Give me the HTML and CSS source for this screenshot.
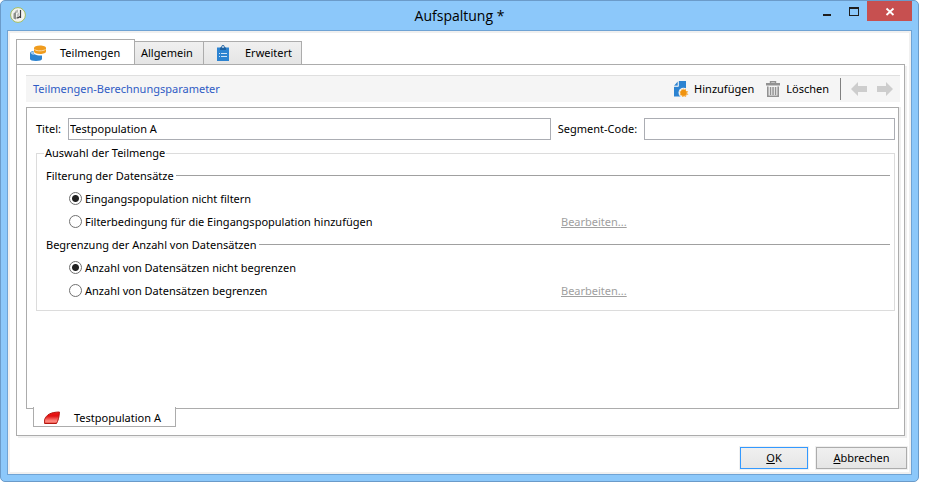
FILE: index.html
```html
<!DOCTYPE html>
<html lang="de">
<head>
<meta charset="utf-8">
<title>Aufspaltung</title>
<link rel="stylesheet" href="styles.css">
</head>
<body>
<div class="window">
  <header class="titlebar">
    <svg class="app-icon" viewBox="0 0 16 16" aria-hidden="true">
      <circle cx="8" cy="8" r="7.4" fill="#f3f3ef" stroke="#a3bd5e" stroke-width="1"/>
      <path d="M3.500 6.500l2.500-2v8l-2.500-1z" fill="#8b8f8b"/>
      <path d="M5 4l3-1.500v3L6 6z" fill="#b5b8b5"/>
      <path d="M7 7l2-1.500v6L7 12z" fill="#c2c4c2"/>
      <path d="M10.500 3v8M6.500 11c1.500 0 3-.5 4-2" fill="none" stroke="#3c3c3c" stroke-width="1.200"/>
    </svg>
    <h1 class="title">Aufspaltung *</h1>
    <div class="window-buttons">
      <button class="win-btn" type="button" aria-label="Minimieren"><svg viewBox="0 0 27 20"><path d="M10 13h8v2h-8z" fill="#1e1e1e"/></svg></button>
      <button class="win-btn" type="button" aria-label="Maximieren"><svg viewBox="0 0 27 20"><path fill-rule="evenodd" d="M9 6h10v9H9zM10 8v6h8V8z" fill="#1e1e1e"/></svg></button>
      <button class="win-btn close" type="button" aria-label="Schließen"><svg viewBox="0 0 45 20"><path d="M19.500 7.500l7 6.500M26.500 7.500l-7 6.500" stroke="#fff" stroke-width="1.800"/></svg></button>
    </div>
  </header>

  <main class="client">
    <div class="tabs" role="tablist">
      <button class="tab active" type="button" role="tab" aria-selected="true">
        <svg class="icon" viewBox="0 0 16 16" aria-hidden="true">
          <path d="M0 8.500C0 7 1.500 6 3.500 6v2c1 1.500 3 2.200 5.500 2.400h3V14c0 1.200-2.500 2-6 2s-6-.8-6-2z" fill="#2c83d1"/>
          <path d="M.8 8c0-.8 1.200-1.300 2.700-1.300v1.500c.5 1 1.500 1.500 2.500 1.800C3 10 .8 9.200.8 8z" fill="#a7cdef"/>
          <path d="M4 3c0-1.500 2.500-2.500 6-2.500S16 1.500 16 3v3.500C16 8 13.500 9 10 9S4 8 4 6.500z" fill="#f09c1e"/>
          <path d="M4.500 4.500C6 5.600 8 5.800 10 5.800s4-.3 5.500-1.300" fill="none" stroke="#fbe0b4" stroke-width=".9"/>
        </svg>
        <span>Teilmengen</span>
      </button>
      <button class="tab plain" type="button" role="tab" aria-selected="false"><span>Allgemein</span></button>
      <button class="tab" type="button" role="tab" aria-selected="false">
        <svg class="icon" viewBox="0 0 16 16" aria-hidden="true">
          <path d="M2 2.500h12V16H2z" fill="#2c83d1"/>
          <path d="M5 5V2.500h1.200C6.200 1 7 0 8 0s1.800 1 1.800 2.500H11V5z" fill="#1d5f9f"/>
          <circle cx="8" cy="2" r=".9" fill="#dceaf7"/>
          <path d="M4 8.500h1M6 8.500h6M4 11.500h1M6 11.500h6" stroke="#cfe3f6" stroke-width="1"/>
        </svg>
        <span>Erweitert</span>
      </button>
    </div>

    <section class="panel">
      <div class="toolbar">
        <h2 class="toolbar-title">Teilmengen-Berechnungsparameter</h2>
        <button class="tool" type="button">
          <svg class="icon" viewBox="0 0 16 16" aria-hidden="true">
            <path d="M5.500 0H13v7.500c-3-.5-5.500 1.500-5.500 4.500 0 1.500.3 2.500 1 3.500H1V5.500h4.500z" fill="#2c83d1"/>
            <path d="M1 4.800L4.800.5v4.300z" fill="#2c83d1"/>
            <path d="M1 5.300h4.300V0" fill="none" stroke="#f5f5f5" stroke-width=".8"/>
            <circle cx="10.500" cy="11.800" r="5" fill="#f5f5f5"/>
            <path d="M10 6.600l1 2 2-.9v2.200l2.200.1-1 2 1.300 1.700-2.200.5-.3 2.100-1.900-1-1.800 1.300-.6-2.100-2.200-.2 1-2-1.200-1.700 2.100-.6.200-2.200 1.700.9z" fill="#f6b75c"/>
            <circle cx="10.500" cy="11.800" r="3" fill="#f0930e"/>
          </svg>
          <span>Hinzufügen</span>
        </button>
        <button class="tool" type="button">
          <svg class="icon" viewBox="0 0 16 16" aria-hidden="true">
            <path d="M5.500 2.500V.8h5v1.700" fill="none" stroke="#929292" stroke-width="1.400"/>
            <path d="M1 2h14v2.500H1z" fill="#929292"/>
            <path d="M2.800 5.500v9.700h10.400V5.500" fill="none" stroke="#929292" stroke-width="1.600"/>
            <path d="M4.800 6h1.500v8H4.800zM7.300 6h1.500v8H7.300zM9.800 6h1.500v8H9.800z" fill="#929292"/>
          </svg>
          <span>Löschen</span>
        </button>
        <div class="nav">
          <button class="nav-btn" type="button" disabled aria-label="Zurück"><svg class="icon" viewBox="0 0 16 16"><path d="M0 8l7-7v4h9v6H7v4z" fill="#cdcdcd"/></svg></button>
          <button class="nav-btn" type="button" disabled aria-label="Vor"><svg class="icon" viewBox="0 0 16 16"><path d="M16 8L9 1v4H0v6h9v4z" fill="#cdcdcd"/></svg></button>
        </div>
      </div>

      <form class="sheet">
        <div class="fields">
          <label for="titel">Titel:</label>
          <input id="titel" class="text titel" type="text" value="Testpopulation A">
          <label for="code">Segment-Code:</label>
          <input id="code" class="text code" type="text">
        </div>
        <fieldset class="group">
          <legend>Auswahl der Teilmenge</legend>
          <h3 class="rule">Filterung der Datensätze</h3>
          <div class="option">
            <label><input type="radio" name="filter" checked>Eingangspopulation nicht filtern</label>
          </div>
          <div class="option">
            <label><input type="radio" name="filter">Filterbedingung für die Eingangspopulation hinzufügen</label>
            <a class="edit" href="#">Bearbeiten...</a>
          </div>
          <h3 class="rule">Begrenzung der Anzahl von Datensätzen</h3>
          <div class="option">
            <label><input type="radio" name="limit" checked>Anzahl von Datensätzen nicht begrenzen</label>
          </div>
          <div class="option">
            <label><input type="radio" name="limit">Anzahl von Datensätzen begrenzen</label>
            <a class="edit" href="#">Bearbeiten...</a>
          </div>
        </fieldset>
      </form>
      <div class="sheet-tabs" role="tablist">
        <button class="sheet-tab" type="button" role="tab" aria-selected="true">
          <svg class="icon" viewBox="0 0 16 16" aria-hidden="true">
            <defs><linearGradient id="red" x1="0" y1="0" x2="0" y2="1"><stop offset="0" stop-color="#f01515"/><stop offset=".35" stop-color="#e01010"/><stop offset=".8" stop-color="#ff8f86"/><stop offset="1" stop-color="#e84a40"/></linearGradient></defs>
            <path d="M.6 13.500V9.500C2.500 5 6 2.200 15.400 2 15.300 7 14 11 12.500 13.500z" fill="url(#red)" stroke="#b3160f"/>
          </svg>
          <span>Testpopulation A</span>
        </button>
      </div>
    </section>

    <footer class="actions">
      <button class="btn default" type="button"><u>O</u>K</button>
      <button class="btn cancel" type="button"><u>A</u>bbrechen</button>
    </footer>
  </main>
</div>
</body>
</html>
```
FILE: styles.css
```css
* { box-sizing: border-box; }

body {
  margin: 0;
  background: #fff;
  color: #000;
  font: 11px/16px "Noto Sans", "Open Sans", sans-serif;
}

button, input {
  font: inherit;
  color: inherit;
}

button {
  display: flex;
  align-items: center;
  margin: 0;
  padding: 0;
  border: 0;
  background: none;
}

h1, h2, h3 { margin: 0; font-weight: 400; font-size: inherit; }

svg { display: block; }

.icon { width: 16px; height: 16px; flex: none; }

.window {
  display: flex;
  flex-direction: column;
  min-height: calc(100vh - 12px);
  margin-right: 8px;
  padding: 0 6px 6px;
  border: 1px solid #6b9bc9;
  border-radius: 5px;
  background: #8cc8fa;
}

.titlebar {
  display: flex;
  align-items: flex-start;
  height: 29px;
}

.app-icon { width: 16px; height: 16px; margin: 6px 0 0 3px; }

.title {
  flex: 1;
  padding-left: 80px;
  font-family: "Open Sans", "Noto Sans", sans-serif;
  font-size: 14px;
  line-height: 30px;
  text-align: center;
}

.window-buttons { display: flex; }
.win-btn { width: 27px; height: 20px; }
.win-btn svg { width: 100%; height: 100%; }
.win-btn.close { width: 45px; background: #c75050; }

.client {
  flex: 1;
  display: flex;
  flex-direction: column;
  padding: 6px 4px 2px 6px;
  border: 1px solid #6fa3d4;
  background: #fff;
  box-shadow: inset 0 0 0 2px #f0f0f0;
}

.tabs {
  display: flex;
  align-items: flex-end;
  margin: 2px 0 -1px 2px;
}

.tab {
  gap: 14px;
  height: 24px;
  min-width: 98px;
  padding: 0 9px 0 11px;
  border: 1px solid #acacac;
  border-left: 0;
  background: linear-gradient(#f0f0f0, #e5e5e5);
}

.tab.plain { min-width: 69px; padding: 0 7px 0 6px; }

.tab.active {
  height: 26px;
  min-width: 119px;
  padding: 0 10px 0 13px;
  border-left: 1px solid #acacac;
  border-bottom: 0;
  background: #fff;
}

.panel {
  flex: 1;
  display: flex;
  flex-direction: column;
  margin: 0 2px;
  padding: 10px 4px 8px 9px;
  border: 1px solid #acacac;
  box-shadow: 2px 2px 0 #f0f0f0;
}

.toolbar {
  display: flex;
  align-items: center;
  height: 27px;
  margin-bottom: 5px;
  padding: 0 7px;
  border-top: 1px solid #dfdfdf;
  background: #f5f5f5;
}

.toolbar-title { flex: 1; color: #2f5bc4; }
.tool { gap: 5px; margin-right: 11px; }

.nav {
  display: flex;
  gap: 10px;
  height: 22px;
  padding-left: 10px;
  border-left: 1px solid #808080;
}

.sheet {
  flex: 1;
  margin-right: 1px;
  padding: 10px 3px 0 9px;
  border: 1px solid #acacac;
  box-shadow: 2px 0 0 #f0f0f0;
}

.fields {
  display: flex;
  align-items: center;
  gap: 7px;
}

.text {
  height: 22px;
  min-width: 0;
  padding: 0 1px 2px;
  border: 1px solid #abadb3;
  background: #fff;
}

.titel { flex: 483; }
.code { flex: 249; }

.group {
  min-width: 0;
  margin: 5px 0 0;
  padding: 3px 4px 8px 9px;
  border: 1px solid #dcdcdc;
}

.group legend { margin-left: -2px; padding: 0 1px; }

.rule {
  display: flex;
  align-items: center;
  gap: 2px;
  height: 23px;
}

.rule::after {
  content: "";
  flex: 1;
  height: 1px;
  background: #a0a0a0;
}

.option {
  display: grid;
  grid-template-columns: 492px 1fr;
  align-items: center;
  height: 23px;
  padding-left: 23px;
}

.option label { display: flex; align-items: center; gap: 3px; }

.option input {
  appearance: none;
  width: 13px;
  height: 13px;
  margin: 0;
  border: 1px solid #707070;
  border-radius: 50%;
  background: #fff;
}

.option input:checked { background: radial-gradient(circle, #212121 3px, #fff 4px); }

.edit { color: #a0a0a0; }

.sheet-tabs { display: flex; margin: -2px 0 0 7px; }

.sheet-tab {
  gap: 14px;
  height: 20px;
  min-width: 143px;
  padding: 2px 10px 0;
  border: 1px solid #acacac;
  border-top: 0;
  background: #fff;
}

.actions {
  display: flex;
  justify-content: flex-end;
  gap: 8px;
  margin-top: 11px;
  padding-bottom: 3px;
}

.btn {
  justify-content: center;
  height: 22px;
  border: 1px solid #acacac;
  background: linear-gradient(#f0f0f0, #e5e5e5);
  box-shadow: 0 0 0 1px #f0f0f0;
}

.btn.default { width: 68px; border-color: #3399ff; }
.btn.cancel { width: 91px; }
```
